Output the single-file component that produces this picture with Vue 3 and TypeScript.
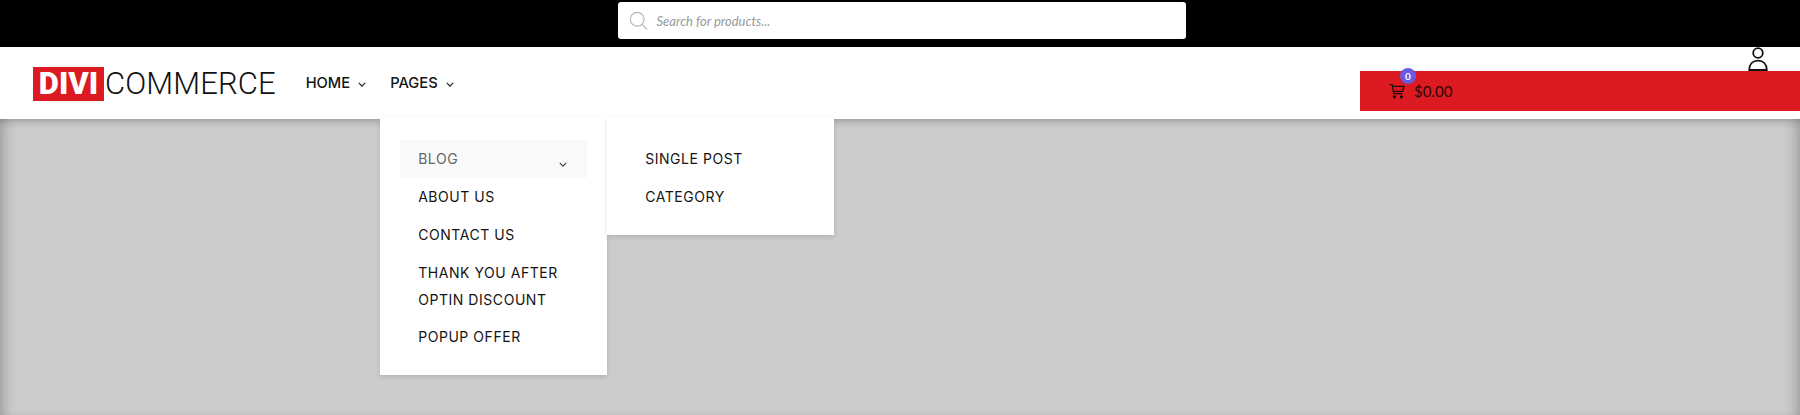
<script setup lang="ts">
interface MenuItem {
  label: string
  active?: boolean
  children?: string[]
}

const pageItems: MenuItem[] = [
  { label: 'Blog', active: true, children: ['Single Post', 'Category'] },
  { label: 'About Us' },
  { label: 'Contact Us' },
  { label: 'Thank You After Optin Discount' },
  { label: 'Popup Offer' }
]
</script>

<template>
  <div class="page">
    <div class="top-bar">
      <div class="search">
        <svg class="search-icon" viewBox="0 0 22 22" fill="none" stroke="#b5b5b5" stroke-width="1.4">
          <circle cx="9.5" cy="9.5" r="8" />
          <path d="M15 15.5l5.5 5.5" stroke-linecap="round" />
        </svg>
        <span class="search-text">Search for products...</span>
      </div>
    </div>

    <header class="header">
      <a class="logo">
        <span class="logo-mark">DIVI</span>
        <span class="logo-word">COMMERCE</span>
      </a>

      <nav class="nav">
        <div class="nav-item">
          HOME
          <svg class="chevron" viewBox="0 0 10 6"><path d="M1 1l4 4 4-4" /></svg>
        </div>
        <div class="nav-item">
          PAGES
          <svg class="chevron" viewBox="0 0 10 6"><path d="M1 1l4 4 4-4" /></svg>

          <ul class="dropdown">
            <li v-for="item in pageItems" :key="item.label" class="drop-item">
              <div class="drop-link" :class="{ active: item.active }">
                <span>{{ item.label }}</span>
                <svg v-if="item.children" class="chevron sub-chevron" viewBox="0 0 10 6"><path d="M1 1l4 4 4-4" /></svg>
              </div>
              <ul v-if="item.children" class="submenu">
                <li v-for="child in item.children" :key="child" class="sub-link">{{ child }}</li>
              </ul>
            </li>
          </ul>
        </div>
      </nav>

      <div class="account">
        <div class="user-row">
          <svg class="user-icon" viewBox="0 0 20 24" fill="none" stroke="#111" stroke-width="1.8">
            <circle cx="10" cy="6" r="4.8" />
            <path d="M1.2 23c0-6 3.6-9.4 8.8-9.4s8.8 3.4 8.8 9.4z" />
          </svg>
        </div>
        <div class="cart">
          <span class="cart-icon-wrap">
            <svg class="cart-icon" viewBox="0 0 16 16" fill="none" stroke="#1a0a0a" stroke-width="1.2">
              <path d="M0.5 1.5h2.6l1.6 9.2h8.6" />
              <path d="M3.4 3.4h11.6l-1.3 5H4.3" />
              <circle cx="5.4" cy="13.8" r="1" fill="#1a0a0a" />
              <circle cx="12.4" cy="13.8" r="1" fill="#1a0a0a" />
            </svg>
            <span class="badge">0</span>
          </span>
          <span class="cart-total">$0.00</span>
        </div>
      </div>
    </header>

    <main class="content"></main>
  </div>
</template>

<style>
html,
body {
  margin: 0;
  background: #ccc;
}
</style>

<style scoped>
.page {
  height: 415px;
  display: flex;
  flex-direction: column;
  overflow: hidden;
  font-family: Inter, "Liberation Sans", sans-serif;
  color: #141414;
}

.top-bar {
  height: 47px;
  flex: none;
  background: #000;
  display: flex;
  justify-content: center;
  padding: 2px 0 0 3px;
  box-sizing: border-box;
}

.search {
  width: 568px;
  height: 37px;
  background: #fff;
  border-radius: 3px;
  display: flex;
  align-items: center;
  padding-left: 11px;
  box-sizing: border-box;
}

.search-icon {
  width: 19px;
  height: 19px;
}

.search-text {
  margin-left: 9px;
  font-family: Lato, sans-serif;
  font-style: italic;
  font-size: 13px;
  color: #999;
}

.header {
  height: 72px;
  flex: none;
  background: #fff;
  display: flex;
  align-items: center;
  padding-left: 33px;
  position: relative;
  z-index: 2;
}

.logo {
  display: flex;
  align-items: center;
  margin-top: 1px;
}

.logo-mark {
  width: 71px;
  height: 34px;
  background: #dc1a21;
  color: #fff;
  font-family: Roboto, sans-serif;
  font-weight: 900;
  font-size: 31px;
  line-height: 34px;
  text-align: center;
}

.logo-word {
  margin-left: 1px;
  font-family: Roboto, sans-serif;
  font-weight: 300;
  font-size: 31px;
  letter-spacing: 0.1px;
  color: #111;
}

.nav {
  display: flex;
  margin-left: 30px;
  gap: 24px;
}

.nav-item {
  position: relative;
  display: flex;
  align-items: center;
  gap: 8px;
  font-size: 14.7px;
  font-weight: 500;
  line-height: 20px;
  height: 20px;
}

.chevron {
  width: 8px;
  height: 5px;
  fill: none;
  stroke: #222;
  stroke-width: 1.6;
  margin-top: 2px;
}

.dropdown,
.submenu {
  position: absolute;
  margin: 0;
  list-style: none;
  background: #fff;
  width: 227px;
  box-sizing: border-box;
  box-shadow: 0 2px 5px rgba(0, 0, 0, 0.12);
  font-size: 14px;
  font-weight: 400;
  letter-spacing: 0.55px;
  text-transform: uppercase;
}

.dropdown {
  top: 44px;
  left: -10px;
  padding: 23px 20px 19px;
}

.drop-link {
  display: flex;
  justify-content: space-between;
  padding: 5px 20px 5px 18px;
  line-height: 27px;
  box-sizing: border-box;
  min-height: 38px;
}

.drop-link.active {
  background: #f9f9f9;
  color: #666;
}

.sub-chevron {
  margin-top: 17px;
  stroke: #444;
}

.submenu {
  left: 227px;
  top: 0;
  padding: 23px 20px 19px;
}

.sub-link {
  padding: 5px 0 5px 18px;
  line-height: 28px;
}

.account {
  margin-left: auto;
  width: 440px;
  height: 72px;
  flex: none;
  display: flex;
  flex-direction: column;
}

.user-row {
  height: 24px;
  flex: none;
  display: flex;
  justify-content: flex-end;
  padding-right: 32px;
  overflow: hidden;
}

.user-icon {
  width: 20px;
  height: 24px;
}

.cart {
  height: 40px;
  flex: none;
  background: #dc1a21;
  display: flex;
  align-items: center;
  padding-left: 29px;
}

.cart-icon-wrap {
  position: relative;
  display: flex;
}

.cart-icon {
  width: 16px;
  height: 16px;
}

.badge {
  position: absolute;
  top: -15px;
  left: 11px;
  width: 16px;
  height: 16px;
  border-radius: 50%;
  background: #6a5be2;
  color: #fff;
  font-family: Lato, sans-serif;
  font-size: 10px;
  font-weight: 700;
  line-height: 16px;
  text-align: center;
}

.cart-total {
  margin-left: 9px;
  font-family: Lato, sans-serif;
  font-size: 15px;
  color: #2a0506;
}

.content {
  flex: 1;
  background: #ccc;
  box-shadow:
    inset 12px 0 12px -7px rgba(0, 0, 0, 0.2),
    inset -12px 0 12px -7px rgba(0, 0, 0, 0.2),
    inset 0 8px 8px -5px rgba(0, 0, 0, 0.18);
}
</style>
